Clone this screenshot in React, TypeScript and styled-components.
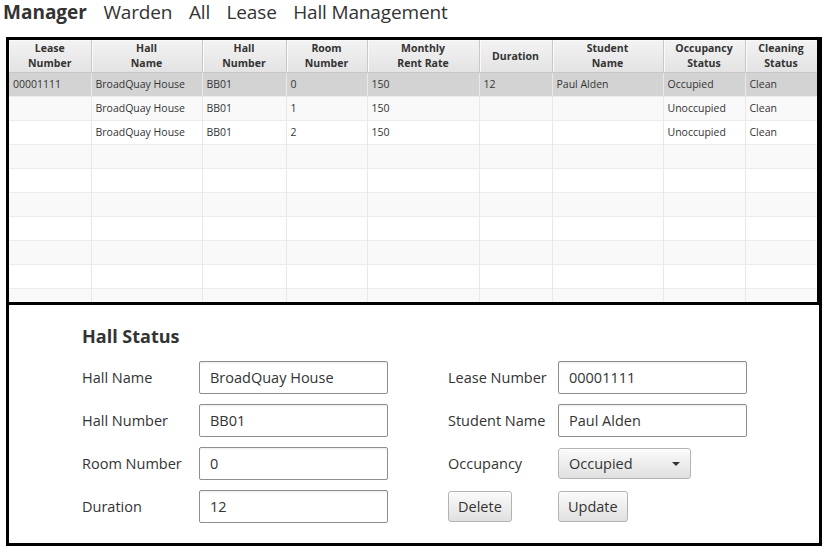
import React from "react";
import styled, { createGlobalStyle } from "styled-components";

const Global = createGlobalStyle`
  html, body { margin: 0; padding: 0; background: #fff; }
  body { font-family: "Open Sans", "Noto Sans", sans-serif; color: #333; }
`;

const Page = styled.div`
  width: 831px;
  height: 557px;
  overflow: hidden;
`;

const Nav = styled.nav`
  display: flex;
  align-items: center;
  gap: 16.5px;
  height: 37px;
  padding-left: 3px;
  box-sizing: border-box;
  padding-bottom: 14px;
`;

const NavItem = styled.span<{ $active?: boolean }>`
  font-size: 19px;
  font-weight: ${(p) => (p.$active ? 700 : 400)};
  letter-spacing: ${(p) => (p.$active ? "0" : "-0.15px")};
  color: #333;
`;

const Frame = styled.div`
  margin-left: 6px;
  width: 816px;
  border: 3px solid #000;
  box-sizing: border-box;
  display: flex;
  flex-direction: column;
`;

const TableArea = styled.div`
  height: 262px;
  overflow: hidden;
  border-right: 2px solid #000;
  background: #fff;
`;

const Table = styled.table`
  border-collapse: collapse;
  table-layout: fixed;
  width: 808px;
  font-size: 10.5px;
`;

const HeadCell = styled.th`
  height: 32px;
  padding: 1px 2px 0;
  box-sizing: border-box;
  font-weight: 700;
  line-height: 15px;
  color: #333;
  text-align: center;
  background: linear-gradient(#f3f3f3, #e3e3e3);
  border-right: 1px solid #c8c8c8;
  border-bottom: 1px solid #c8c8c8;
  box-shadow: inset 1px 1px 0 #fafafa;
`;

const Row = styled.tr<{ $odd: boolean; $selected: boolean }>`
  height: 24px;
  background: ${(p) => (p.$selected ? "#d3d3d3" : p.$odd ? "#f9f9f9" : "#fff")};
  border-bottom: 1px solid #ececec;
`;

const Cell = styled.td`
  padding: 0 4px;
  box-sizing: border-box;
  border-right: 1px solid #e8e8e8;
  color: #333;
  white-space: nowrap;
  overflow: hidden;
`;

const Form = styled.section`
  border-top: 3px solid #000;
  padding: 17px 0 0 73px;
  height: 241px;
  box-sizing: border-box;
`;

const Title = styled.h2`
  margin: 0 0 11px;
  font-size: 18px;
  line-height: 28px;
  font-weight: 700;
  color: #333;
`;

const Columns = styled.div`
  display: flex;
  gap: 60px;
`;

const FieldGrid = styled.div<{ $label: number }>`
  display: grid;
  grid-template-columns: ${(p) => p.$label}px 189px;
  grid-auto-rows: 33px;
  row-gap: 10px;
  align-items: center;
`;

const Label = styled.label`
  font-size: 14.5px;
  color: #333;
`;

const Input = styled.input`
  height: 33px;
  width: 189px;
  box-sizing: border-box;
  border: 1px solid #8e8e8e;
  border-radius: 2px;
  padding: 0 10px;
  font-family: inherit;
  font-size: 14.5px;
  color: #333;
  background: #fff;
  box-shadow: inset 0 2px 2px -1px rgba(0, 0, 0, 0.08);
  outline: none;
`;

const raised = `
  box-sizing: border-box;
  border: 1px solid #b3b3b3;
  border-radius: 3px;
  background: linear-gradient(#fbfbfb, #e0e0e0);
  box-shadow: inset 0 1px 0 #fff;
  font-family: inherit;
  font-size: 14.5px;
  color: #333;
`;

const Combo = styled.div`
  ${raised}
  width: 133px;
  height: 31px;
  display: flex;
  align-items: center;
  justify-content: space-between;
  padding: 0 10px;
`;

const Arrow = styled.span`
  width: 0;
  height: 0;
  border-left: 4.5px solid transparent;
  border-right: 4.5px solid transparent;
  border-top: 4.5px solid #333;
`;

const Button = styled.button`
  ${raised}
  height: 31px;
  padding: 0 9px;
  justify-self: start;
`;

const columns = [
  ["Lease", "Number"],
  ["Hall", "Name"],
  ["Hall", "Number"],
  ["Room", "Number"],
  ["Monthly", "Rent Rate"],
  ["Duration"],
  ["Student", "Name"],
  ["Occupancy", "Status"],
  ["Cleaning", "Status"],
];
const widths = [82, 111, 84, 81, 112, 73, 111, 82, 72];

const data: string[][] = [
  ["00001111", "BroadQuay House", "BB01", "0", "150", "12", "Paul Alden", "Occupied", "Clean"],
  ["", "BroadQuay House", "BB01", "1", "150", "", "", "Unoccupied", "Clean"],
  ["", "BroadQuay House", "BB01", "2", "150", "", "", "Unoccupied", "Clean"],
];
const rows = Array.from({ length: 10 }, (_, i) => data[i] ?? Array(9).fill(""));

export default function App() {
  return (
    <Page>
      <Global />
      <Nav>
        <NavItem $active>Manager</NavItem>
        <NavItem>Warden</NavItem>
        <NavItem>All</NavItem>
        <NavItem>Lease</NavItem>
        <NavItem>Hall Management</NavItem>
      </Nav>
      <Frame>
        <TableArea>
          <Table>
            <colgroup>
              {widths.map((w, i) => (
                <col key={i} style={{ width: w }} />
              ))}
            </colgroup>
            <thead>
              <tr>
                {columns.map((c, i) => (
                  <HeadCell key={i}>
                    {c.map((l, j) => (
                      <React.Fragment key={j}>
                        {j > 0 && <br />}
                        {l}
                      </React.Fragment>
                    ))}
                  </HeadCell>
                ))}
              </tr>
            </thead>
            <tbody>
              {rows.map((r, i) => (
                <Row key={i} $odd={i % 2 === 1} $selected={i === 0}>
                  {r.map((v, j) => (
                    <Cell key={j}>{v}</Cell>
                  ))}
                </Row>
              ))}
            </tbody>
          </Table>
        </TableArea>
        <Form>
          <Title>Hall Status</Title>
          <Columns>
            <FieldGrid $label={117}>
              <Label>Hall Name</Label>
              <Input defaultValue="BroadQuay House" />
              <Label>Hall Number</Label>
              <Input defaultValue="BB01" />
              <Label>Room Number</Label>
              <Input defaultValue="0" />
              <Label>Duration</Label>
              <Input defaultValue="12" />
            </FieldGrid>
            <FieldGrid $label={110}>
              <Label>Lease Number</Label>
              <Input defaultValue="00001111" />
              <Label>Student Name</Label>
              <Input defaultValue="Paul Alden" />
              <Label>Occupancy</Label>
              <Combo>
                <span>Occupied</span>
                <Arrow />
              </Combo>
              <Button>Delete</Button>
              <Button>Update</Button>
            </FieldGrid>
          </Columns>
        </Form>
      </Frame>
    </Page>
  );
}
